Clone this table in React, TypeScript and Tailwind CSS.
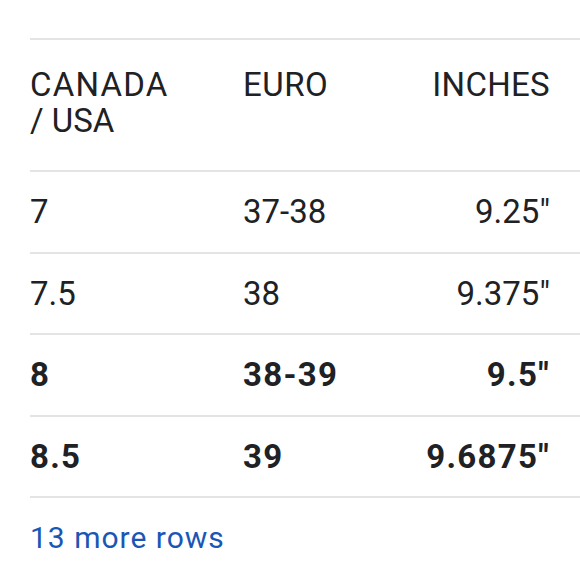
import React from "react";

const rows = [
  { a: "7", b: "37-38", c: '9.25"', bold: false },
  { a: "7.5", b: "38", c: '9.375"', bold: false },
  { a: "8", b: "38-39", c: '9.5"', bold: true },
  { a: "8.5", b: "39", c: '9.6875"', bold: true },
];

export default function App() {
  return (
    <div
      className="w-[580px] h-[580px] bg-white overflow-hidden text-[#202124]"
      style={{ fontFamily: "Roboto, 'Open Sans', sans-serif" }}
    >
      <div className="pt-[38px] pl-[30px]">
        <div className="border-t-2 border-[#e4e4e4]">
          <div className="grid grid-cols-[213px_1fr_auto] pr-[30px] pt-[27px] h-[130px] text-[33px] leading-[36px]">
            <div>
              <span className="tracking-[1.2px]">CANADA</span>
              <br />/ USA
            </div>
            <div className="tracking-[0.5px]">EURO</div>
            <div className="text-right tracking-[0.3px]">INCHES</div>
          </div>
          {rows.map((r, i) => (
            <div
              key={i}
              className={`border-t-2 border-[#e4e4e4] grid grid-cols-[213px_1fr_auto] items-center pr-[30px] h-[81.5px] text-[33px] ${
                r.bold ? "font-bold tracking-[1.3px]" : "font-normal"
              }`}
            >
              <div>{r.a}</div>
              <div>{r.b}</div>
              <div className="text-right">{r.c}</div>
            </div>
          ))}
          <div className="border-t-2 border-[#e4e4e4] pt-[22px] text-[30px] tracking-[1px] leading-[36px] text-[#1a56b5]">
            13 more rows
          </div>
        </div>
      </div>
    </div>
  );
}
